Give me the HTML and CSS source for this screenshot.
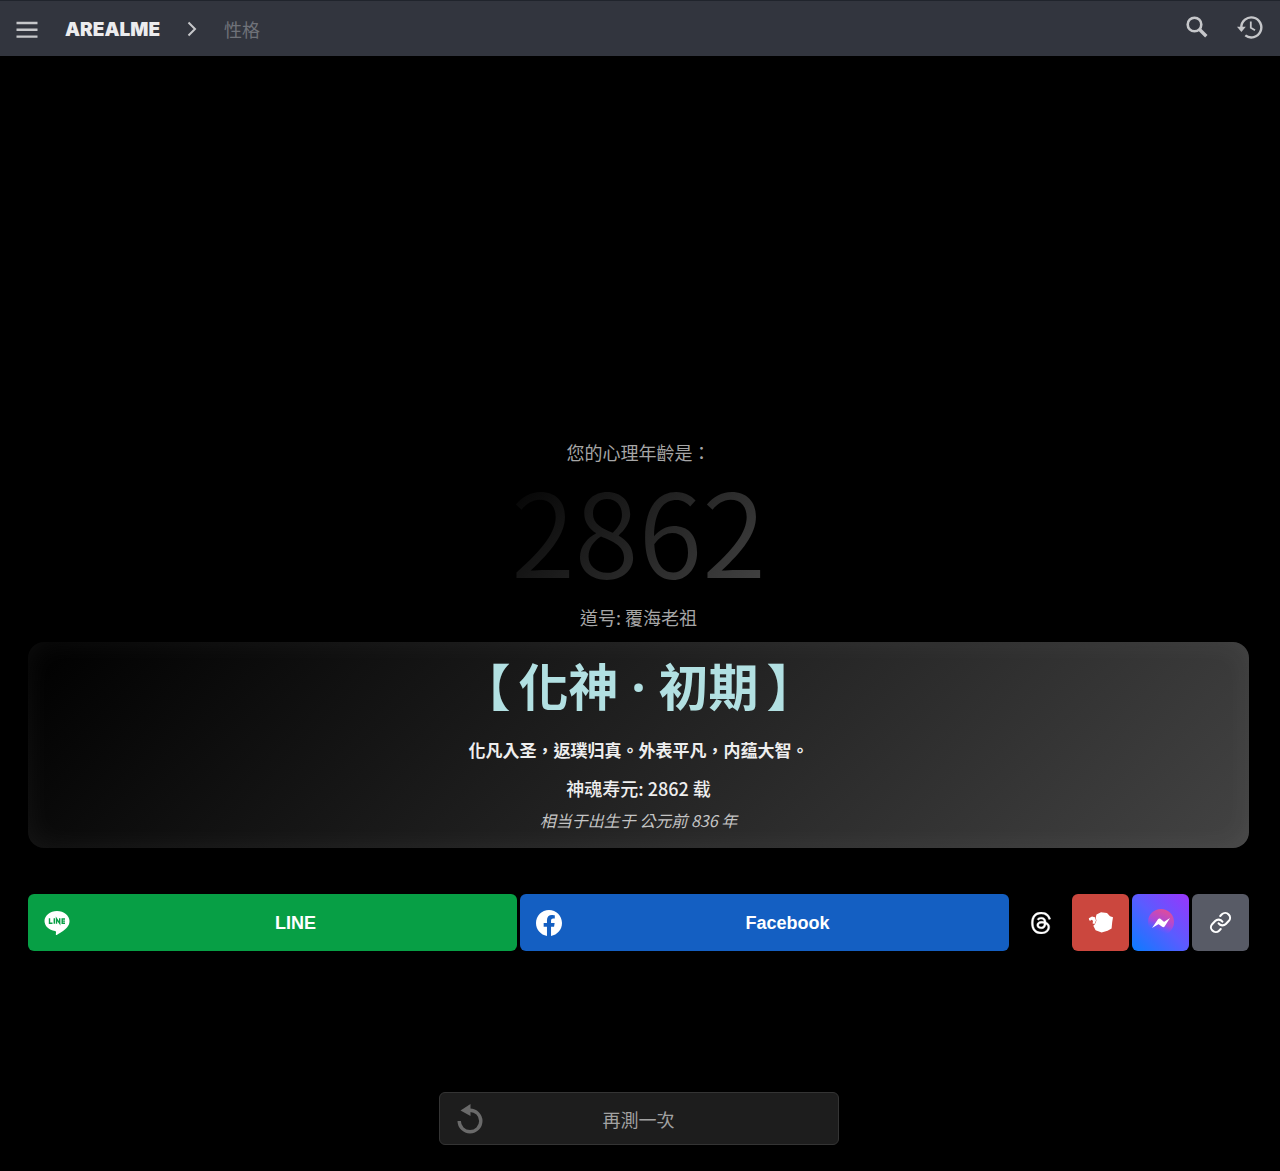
FILE: index.html
```html
<!DOCTYPE html>
<html lang="zh-Hant">
<head>
<meta charset="utf-8">
<meta name="viewport" content="width=device-width, initial-scale=1">
<title>AREALME</title>
<link rel="stylesheet" href="styles.css">
</head>
<body>
<header class="topbar">
  <button class="icon-button" type="button" aria-label="選單">
    <svg width="22" height="17" viewBox="0 0 22 17" fill="none" stroke="currentColor" stroke-width="2.400"><path d="M0.500 2h21M0.500 8.800h21M0.500 15.600h21"/></svg>
  </button>
  <nav class="crumbs" aria-label="導覽">
    <a class="brand" href="#">AREALME</a>
    <svg width="10" height="16" viewBox="0 0 10 16" fill="none" stroke="currentColor" stroke-width="2"><path d="M1.500 1.500L8 8l-6.500 6.500"/></svg>
    <a class="crumb" href="#">性格</a>
  </nav>
  <div class="tools">
    <button class="icon-button" type="button" aria-label="搜尋">
      <svg width="22" height="22" viewBox="0 0 22 22" fill="none" stroke="currentColor"><circle cx="8.500" cy="8.500" r="6.800" stroke-width="2.600"/><path d="M13.300 13.300l7 7" stroke-width="3.400"/></svg>
    </button>
    <button class="icon-button" type="button" aria-label="歷史記錄">
      <svg width="26" height="24" viewBox="0 0 26 24" fill="none" stroke="currentColor" stroke-width="2.400"><path d="M4.300 12.500a10 10 0 1 1 4 7.900"/><path d="M0 11.800h8.800L4.400 17z" fill="currentColor" stroke="none"/><path d="M13.800 6.500v6.200l4.200 2.600" stroke-width="1.800"/></svg>
    </button>
  </div>
</header>

<main class="page">
  <section class="result">
    <p class="lead">您的心理年齡是：</p>
    <p class="age">2862</p>
    <p class="lead">道号: 覆海老祖</p>
    <div class="card">
      <h1 class="rank"><span>【</span><span>化神 · 初期</span><span>】</span></h1>
      <p class="verse">化凡入圣，返璞归真。外表平凡，内蕴大智。</p>
      <p class="lifespan">神魂寿元: 2862 载</p>
      <p class="born">相当于出生于 公元前 836 年</p>
    </div>
  </section>

  <div class="share">
    <a class="share-wide line" href="#">
      <svg width="26" height="26" viewBox="0 0 26 26"><path fill="#fff" d="M13 1C6.100 1 .5 5.500.5 11.100c0 5 4.500 9.200 10.500 10 .9.200 1.100.6 1 1.500l-.2 1.700c-.1.700.4.900 1 .6 1.500-.7 7.600-4.300 10.400-7.600 1.500-1.700 2.300-3.700 2.300-6.200C25.500 5.500 19.900 1 13 1z"/><path fill="none" stroke="#079f45" stroke-width="1.400" d="M5.500 8.300v5h3M10.300 8.300v5.500M12.500 13.800V8.800l3.200 4.500V8.300M21 9h-2.800v4.200H21M18.200 11.100H21"/></svg>
      <span class="share-label">LINE</span>
    </a>
    <a class="share-wide facebook" href="#">
      <svg width="26" height="26" viewBox="0 0 24 24"><path fill="#fff" d="M24 12.073C24 5.405 18.627 0 12 0S0 5.405 0 12.073c0 6.026 4.388 11.020 10.125 11.927v-8.437H7.078v-3.490h3.047V9.413c0-3.026 1.792-4.697 4.533-4.697 1.312 0 2.686.236 2.686.236v2.971h-1.513c-1.491 0-1.956.93-1.956 1.886v2.264h3.328l-.532 3.490h-2.796V24C19.612 23.093 24 18.099 24 12.073z"/></svg>
      <span class="share-label">Facebook</span>
    </a>
    <a class="share-icon threads" href="#" aria-label="Threads">
      <svg width="22" height="22" viewBox="0 0 24 24"><path fill="#fff" stroke="#fff" stroke-width=".4" d="M12.186 24h-.007c-3.581-.024-6.334-1.205-8.184-3.509C2.350 18.440 1.500 15.586 1.472 12.010v-.017c.03-3.579.879-6.430 2.525-8.482C5.845 1.205 8.600.024 12.180 0h.014c2.746.02 5.043.725 6.826 2.098 1.677 1.290 2.858 3.130 3.509 5.467l-2.040.569c-1.104-3.960-3.898-5.984-8.304-6.015-2.910.022-5.110.936-6.540 2.717C4.307 6.504 3.616 8.914 3.589 12c.027 3.086.718 5.496 2.057 7.164 1.430 1.783 3.631 2.698 6.540 2.717 2.623-.02 4.358-.631 5.800-2.045 1.647-1.613 1.618-3.593 1.090-4.798-.31-.71-.873-1.300-1.634-1.750-.192 1.352-.622 2.446-1.284 3.272-.886 1.102-2.140 1.704-3.730 1.790-1.202.065-2.361-.218-3.259-.801-1.063-.689-1.685-1.740-1.752-2.964-.065-1.190.408-2.285 1.330-3.082.88-.76 2.119-1.207 3.583-1.291a13.853 13.853 0 0 1 3.020.142c-.126-.742-.375-1.332-.750-1.757-.513-.586-1.308-.883-2.359-.890h-.029c-.844 0-1.992.232-2.721 1.320L7.734 7.847c.98-1.454 2.568-2.256 4.478-2.256h.044c3.194.02 5.097 1.975 5.287 5.388.108.046.216.094.321.142 1.490.7 2.580 1.761 3.154 3.070.797 1.820.871 4.790-1.548 7.158-1.850 1.810-4.094 2.628-7.277 2.650Zm1.003-11.690c-.242 0-.487.007-.739.021-1.836.103-2.980.946-2.916 2.143.067 1.256 1.452 1.839 2.784 1.767 1.224-.065 2.818-.543 3.086-3.710a10.500 10.500 0 0 0-2.215-.221z"/></svg>
    </a>
    <a class="share-icon plurk" href="#" aria-label="分享">
      <svg width="26" height="24" viewBox="0 0 26 24"><path fill="#fff" d="M8.500 3.500L13 1.200l6 .8 3 3.200 3 1-.8 5-.6 6.300-4 2.300-6 1.600-6-2.200-2.300-4.500 1.600-1.500 1.500-3.500-.6-3.500z"/><path fill="#fff" d="M.8 7.200l3.200-1.600 3 .6 1 3.300-1.500 3.600-1.900-.6.400-2.600-1.200-1.200-1.600 1-1-.5z"/></svg>
    </a>
    <a class="share-icon messenger" href="#" aria-label="Messenger">
      <svg width="28" height="28" viewBox="0 0 28 28">
        <defs><linearGradient id="bubble" x1="0.200" y1="1" x2="0.600" y2="0"><stop offset=".2" stop-color="#7a50ff" stop-opacity="0"/><stop offset=".5" stop-color="#a848dc"/><stop offset="1" stop-color="#e04c9a"/></linearGradient></defs>
        <circle cx="14" cy="13" r="13" fill="url(#bubble)"/><path fill="#fff" d="M5 19l6-8.800c.6-.8 1.600-1 2.400-.4l3.200 2.600c.4.300.7.300 1 0L23 9l-5.400 8.400c-.6.900-1.600 1-2.400.4L12 15.500c-.4-.3-.7-.3-1.100 0z"/>
      </svg>
    </a>
    <a class="share-icon copy" href="#" aria-label="複製連結">
      <svg width="23" height="23" viewBox="0 0 24 24" fill="none" stroke="#fff" stroke-width="2.200" stroke-linecap="round"><path d="M10 13a5 5 0 0 0 7.540.54l3-3a5 5 0 0 0-7.070-7.070l-1.720 1.710"/><path d="M14 11a5 5 0 0 0-7.540-.54l-3 3a5 5 0 0 0 7.070 7.070l1.710-1.710"/></svg>
    </a>
  </div>

  <button class="retry" type="button">
    <svg width="28" height="30" viewBox="0 0 28 30"><path d="M3.200 17a10.800 10.800 0 1 0 10.800-10.800" fill="none" stroke="currentColor" stroke-width="3.400"/><path d="M14.500 0v12L4.500 6.500z" fill="currentColor"/></svg>
    <span class="retry-label">再測一次</span>
  </button>
</main>
</body>
</html>
```

FILE: styles.css
```css
* {
  box-sizing: border-box;
}

body {
  margin: 0;
  background: #000;
  color: #fff;
  font-family: "Noto Sans CJK TC", "Noto Sans", sans-serif;
  font-size: 18px;
  line-height: 26px;
}

p,
h1 {
  margin: 0;
}

a {
  color: inherit;
  text-decoration: none;
}

button {
  font: inherit;
  cursor: pointer;
}

svg {
  display: block;
  flex: none;
}

.topbar {
  display: flex;
  align-items: center;
  height: 56px;
  padding: 1px 17px 0 16px;
  border-top: 1px solid #20242c;
  background: #32353e;
  color: #c6c7ca;
}

.icon-button {
  padding: 0;
  border: 0;
  background: none;
  color: inherit;
}

.crumbs {
  display: flex;
  align-items: center;
  gap: 27px;
  margin-left: 27px;
}

.brand {
  padding-top: 2px;
  color: #ececee;
  font-family: Inter, "Liberation Sans", sans-serif;
  font-size: 19px;
  font-weight: 900;
}

.crumb {
  color: #6f7279;
}

.tools {
  display: flex;
  align-items: center;
  gap: 29px;
  margin-left: auto;
  padding-bottom: 4px;
}

.page {
  display: flex;
  flex-direction: column;
  padding: 383px 31px 27px 28px;
}

.result {
  display: flex;
  flex-direction: column;
  align-items: center;
  text-align: center;
}

.lead {
  color: #a6a6a6;
}

.age {
  margin-bottom: 15px;
  background: linear-gradient(135deg, #000, #434343);
  background-clip: text;
  -webkit-background-clip: text;
  color: transparent;
  font-size: 116px;
  font-weight: 350;
  line-height: 124px;
}

.card {
  align-self: stretch;
  margin-top: 12px;
  padding: 11px 16px 15px;
  border-radius: 16px;
  background: linear-gradient(135deg, #000, #434343);
  box-shadow: inset 0 0 30px rgba(255, 255, 255, 0.06);
}

.rank {
  display: flex;
  justify-content: center;
  gap: 8px;
  color: #b2e0e2;
  font-family: "Noto Sans", "Noto Sans CJK TC", sans-serif;
  font-size: 50px;
  font-weight: 700;
  line-height: 68px;
}

.verse {
  margin-top: 16px;
  color: #eee;
  font-size: 17px;
  font-weight: 700;
}

.lifespan {
  margin-top: 12px;
  color: #eee;
  font-weight: 500;
}

.born {
  margin-top: 6px;
  color: #c4c4c4;
  font-size: 16px;
  font-style: italic;
}

.share {
  display: grid;
  grid-template-columns: 1fr 1fr repeat(4, 57px);
  gap: 3px;
  margin-top: 46px;
}

.share-wide,
.share-icon {
  display: flex;
  align-items: center;
  height: 57px;
  border-radius: 6px;
}

.share-wide {
  gap: 4px;
  padding-left: 16px;
  font-family: "Liberation Sans", Arial, sans-serif;
  font-weight: 700;
}

.share-label {
  flex: 1;
  text-align: center;
}

.share-icon {
  justify-content: center;
}

.line {
  background: #079f45;
}

.facebook {
  background: #145fc2;
}

.threads {
  background: #000;
}

.plurk {
  background: #cb473e;
}

.messenger {
  background: linear-gradient(45deg, #0a7cff, #5a5cff 50%, #9a35fb);
}

.copy {
  background: #585b66;
}

.retry {
  display: grid;
  grid-template-columns: 28px 1fr 28px;
  align-items: center;
  align-self: center;
  width: 400px;
  max-width: 100%;
  height: 53px;
  margin-top: 141px;
  padding: 0 16px;
  border: 1px solid #343434;
  border-radius: 6px;
  background: #1d1d1d;
  color: #6a6a6a;
}

.retry-label {
  color: #a2a2a2;
}
```
